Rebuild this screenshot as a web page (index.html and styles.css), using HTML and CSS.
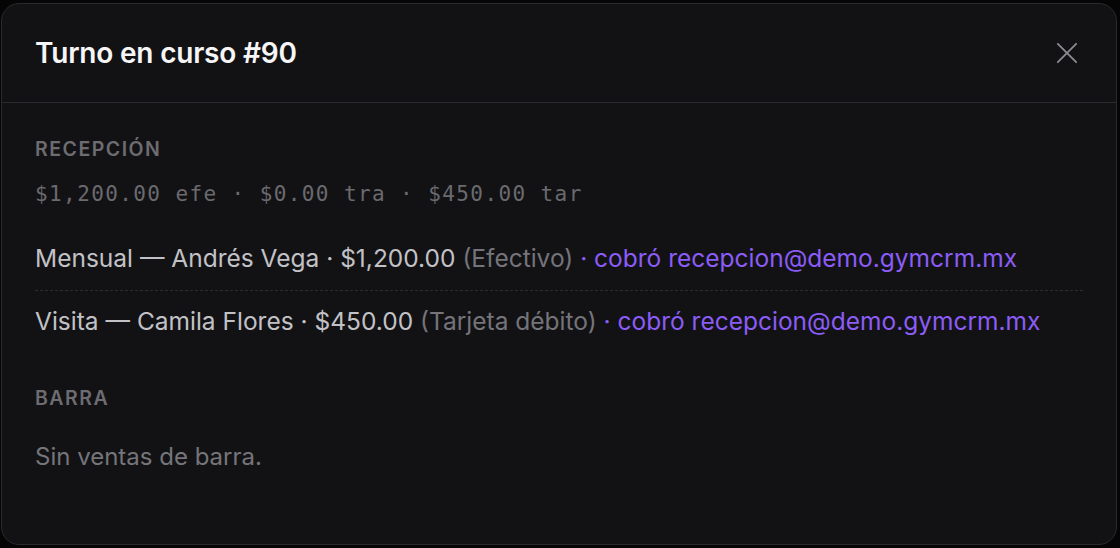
FILE: index.html
```html
<!DOCTYPE html>
<html lang="es">
<head>
<meta charset="utf-8">
<title>Turno en curso #90</title>
<link rel="stylesheet" href="styles.css">
</head>
<body>
<div class="stage">
  <div class="modal">
    <header class="modal-header">
      <h1 class="modal-title">Turno en curso #90</h1>
      <button class="close" aria-label="Cerrar">
        <svg width="24" height="24" viewBox="0 0 24 24" fill="none" stroke="currentColor" stroke-width="2" stroke-linecap="round"><path d="M2 2 L22 22 M22 2 L2 22"/></svg>
      </button>
    </header>
    <div class="modal-body">
      <section class="section">
        <h2 class="label">RECEPCIÓN</h2>
        <p class="totals">$1,200.00 efe · $0.00 tra · $450.00 tar</p>
        <ul class="list">
          <li class="row"><span class="main">Mensual — Andrés Vega · $1,200.00</span> <span class="muted">(Efectivo)</span> <span class="who">· cobró recepcion@demo.gymcrm.mx</span></li>
          <li class="row"><span class="main">Visita — Camila Flores · $450.00</span> <span class="muted">(Tarjeta débito)</span> <span class="who">· cobró recepcion@demo.gymcrm.mx</span></li>
        </ul>
      </section>
      <section class="section section-bar">
        <h2 class="label">BARRA</h2>
        <p class="empty">Sin ventas de barra.</p>
      </section>
    </div>
  </div>
</div>
</body>
</html>
```

FILE: styles.css
```css
* { box-sizing: border-box; }
html, body { margin: 0; padding: 0; background: #050506; }
body { font-family: Inter, "Noto Sans", sans-serif; }
.stage { padding: 3px 3px 3px 1px; height: 548px; }
.modal {
  width: 1116px;
  height: 542px;
  background: #121215;
  border: 1px solid #2a2a2e;
  border-radius: 18px;
  overflow: hidden;
}
.modal-header {
  height: 99px;
  display: flex;
  align-items: center;
  justify-content: space-between;
  padding: 0 38px 0 33px;
  border-bottom: 1px solid #2a2a2e;
}
.modal-title {
  margin: 0;
  font-size: 28px;
  font-weight: 600;
  color: #f6f6f7;
  letter-spacing: -0.2px;
}
.close {
  background: none;
  border: 0;
  padding: 0;
  color: #8a8a8f;
  display: flex;
  width: 22px;
  height: 22px;
}
.close svg { width: 22px; height: 22px; }
.modal-body { padding: 34px 33px 0 33px; }
.label {
  margin: 0;
  font-size: 19.5px;
  font-weight: 600;
  letter-spacing: 1.5px;
  color: #6c6c71;
  line-height: 24px;
}
.totals {
  margin: 21px 0 0 0;
  font-family: "DejaVu Sans Mono", "Liberation Mono", monospace;
  font-size: 21px;
  letter-spacing: 1.4px;
  color: #6a6a6f;
  line-height: 24px;
}
.list { list-style: none; margin: 37px 0 0 0; padding: 0; }
.row {
  font-size: 24.5px;
  line-height: 30px;
  color: #c2c2c6;
}
.row:first-child { padding-bottom: 17px; border-bottom: 1px dashed #2c2c30; }
.row:last-child { padding-top: 15px; }
.muted { color: #74747a; }
.who { color: #8b5cf6; }
.section-bar { margin-top: 50px; }
.empty {
  margin: 32px 0 0 0;
  font-size: 24px;
  line-height: 30px;
  color: #75757a;
}
```
